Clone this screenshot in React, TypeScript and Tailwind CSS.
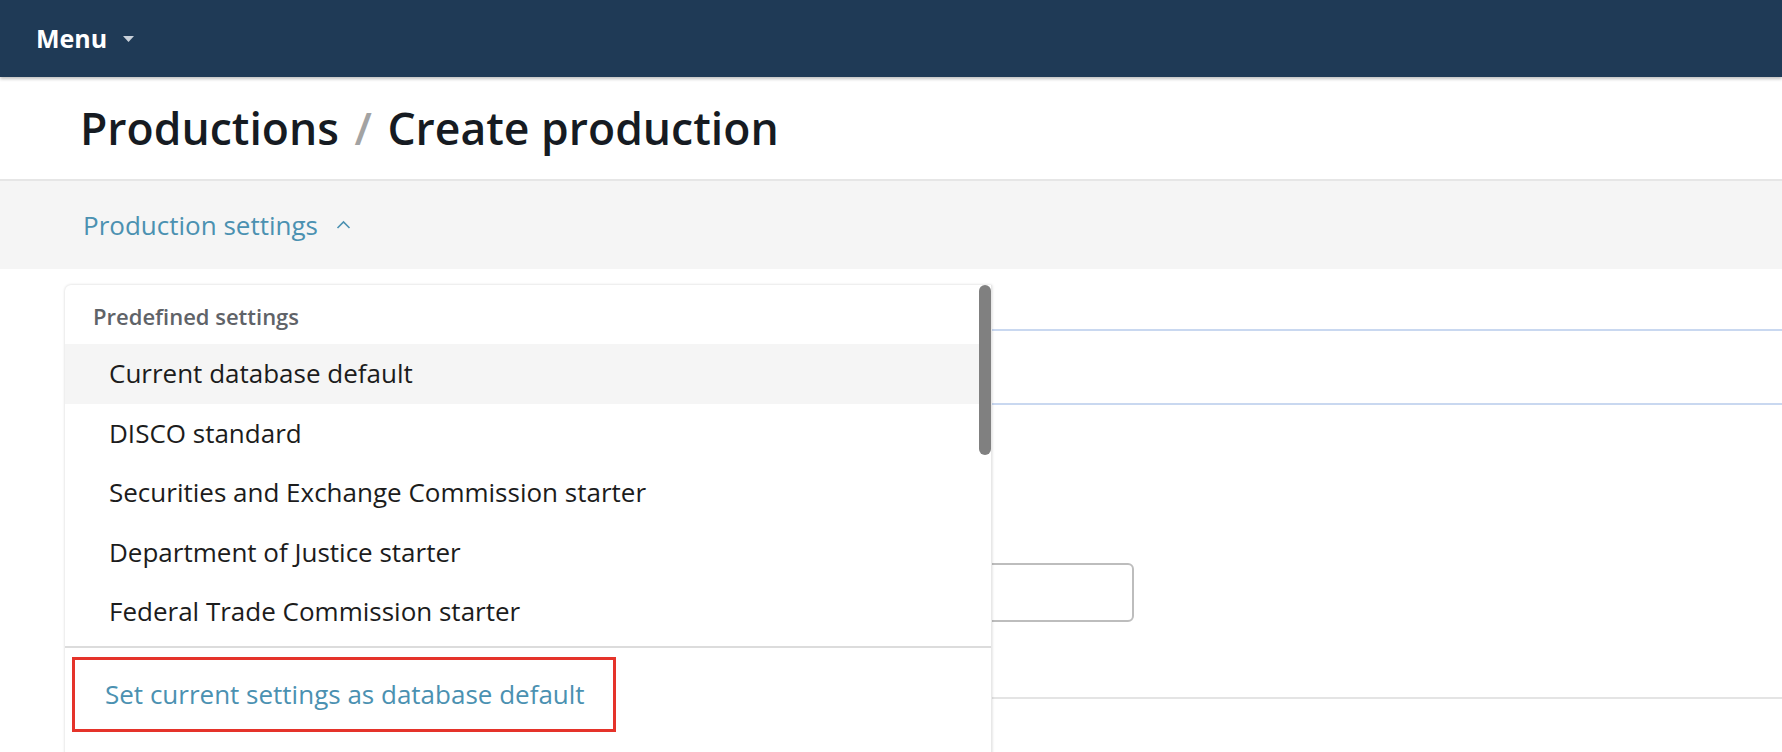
import React from 'react';

const PRESETS = [
  'Current database default',
  'DISCO standard',
  'Securities and Exchange Commission starter',
  'Department of Justice starter',
  'Federal Trade Commission starter',
];

const Caret: React.FC = () => (
  <svg width="11" height="6" viewBox="0 0 11 6" className="ml-[16px] mt-[1px]">
    <path d="M0 0h11L5.5 6z" fill="#c9d1da" />
  </svg>
);

const ChevronUp: React.FC = () => (
  <svg width="15" height="10" viewBox="0 0 15 10" className="ml-[18px]">
    <path d="M1.5 8 7.5 2l6 6" fill="none" stroke="#4b91b1" strokeWidth="1.6" />
  </svg>
);

const App: React.FC = () => {
  return (
    <div
      className="h-screen w-full overflow-hidden bg-white flex flex-col"
      style={{ fontFamily: '"Open Sans", "Noto Sans", sans-serif' }}
    >
      {/* Top navigation */}
      <header className="h-[77px] shrink-0 bg-[#1f3a56] flex items-center px-[36px] shadow-[0_2px_3px_rgba(0,0,0,0.25)] relative z-10">
        <button className="flex items-center text-white font-bold text-[25px]">
          Menu
          <Caret />
        </button>
      </header>

      {/* Page title */}
      <div className="h-[104px] shrink-0 flex items-center pl-[80px] border-b-2 border-[#e6e6e6]">
        <h1 className="text-[44.5px] font-semibold text-[#161b22]">
          Productions <span className="text-[#a3a3a3] mx-[4px]">/</span> Create production
        </h1>
      </div>

      {/* Settings toggle */}
      <div className="h-[88px] shrink-0 bg-[#f5f5f5] flex items-center pl-[83px]">
        <button className="flex items-center text-[26px] text-[#4b91b1]">
          Production settings
          <ChevronUp />
        </button>
      </div>

      {/* Form behind the menu */}
      <div className="relative flex-1">
        <div className="pt-[60px] pl-[65px]">
          <div className="h-[76px] border-y-2 border-[#c9d8f0] flex items-center pl-[900px] text-[22px] text-[#222]">
            :
          </div>
          <div className="mt-[158px] w-[1069px] h-[59px] rounded-[6px] border-2 border-[#bdbdbd]" />
          <div className="mt-[75px] h-[2px] bg-[#e4e4e4]" />
        </div>

        {/* Predefined settings menu */}
        <div className="absolute left-[65px] top-[16px] w-[927px] h-[600px] bg-white rounded-tl-[6px] shadow-[0_0_3px_rgba(0,0,0,0.18)] border-r border-[#e8e8e8]">
          <div className="h-[59px] flex items-center pl-[28px] pt-[3px] text-[22px] font-semibold text-[#5f6368]">
            Predefined settings
          </div>
          {PRESETS.map((p, i) => (
            <div
              key={p}
              className={`h-[59.5px] flex items-center pl-[44px] text-[26px] text-[#1c1c1c] ${i === 0 ? 'bg-[#f5f5f5]' : ''}`}
            >
              {p}
            </div>
          ))}
          <div className="mt-[4px] h-[2px] bg-[#dcdcdc]" />
          <div className="mt-[9px] ml-[7px] w-[544px] h-[75px] border-[3px] border-[#e5332a] flex items-center pl-[30px] text-[26px] text-[#4b91b1]">
            Set current settings as database default
          </div>
          {/* scrollbar thumb */}
          <div className="absolute right-0 top-0 w-[12px] h-[170px] rounded-full bg-[#808080]" />
        </div>
      </div>
    </div>
  );
};

export default App;
